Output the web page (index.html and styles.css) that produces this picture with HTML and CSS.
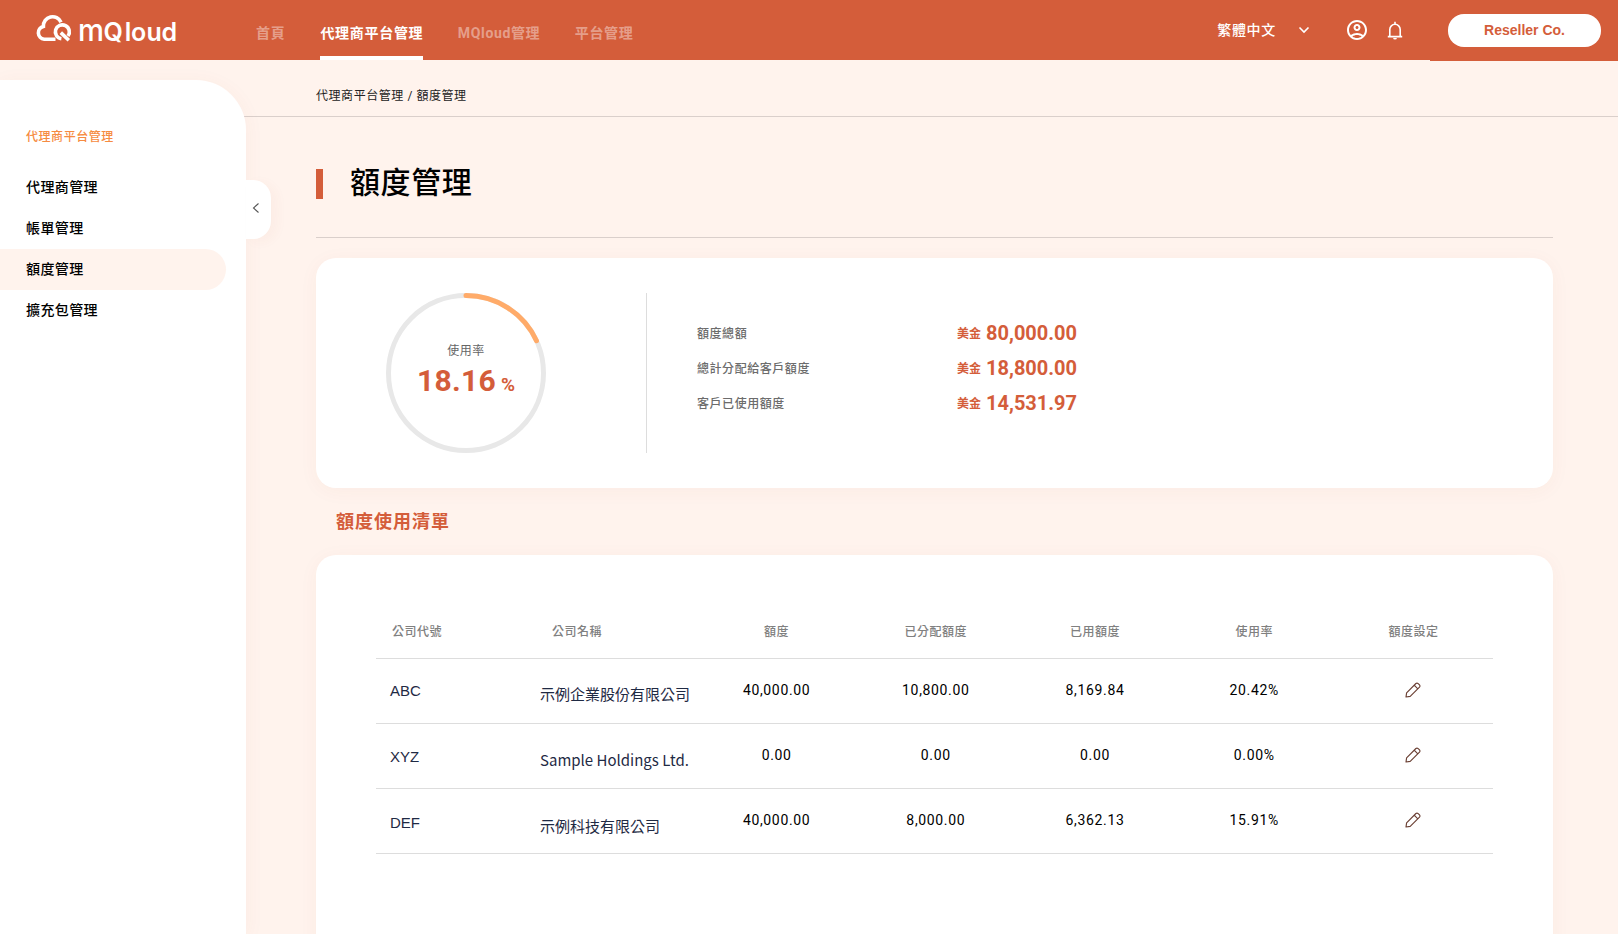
FILE: index.html
```html
<!DOCTYPE html>
<html lang="zh-Hant">
<head>
<meta charset="utf-8">
<title>額度管理</title>
<link rel="stylesheet" href="styles.css">
</head>
<body>
<header class="topbar">
  <svg class="logo" width="142" height="30" viewBox="0 0 142 30" role="img" aria-label="MQloud">
    <path class="logo-mark" d="M19.5 25.2H8.2A6.5 6.5 0 0 1 7.4 12.4A9.2 9.2 0 0 1 25 8.2"/>
    <path class="logo-mark" d="M25.4 24.8A7 7 0 1 1 32 22M24.8 18.6L32.8 26.2"/>
    <text class="logo-text logo-m" x="42" y="26.6" textLength="26" lengthAdjust="spacingAndGlyphs">m</text>
    <text class="logo-text" y="26.6" x="67.6 88.8 95 110.6 125.4">Qloud</text>
  </svg>
  <nav class="nav">
    <a class="nav-item">首頁</a>
    <a class="nav-item active">代理商平台管理</a>
    <a class="nav-item">MQloud管理</a>
    <a class="nav-item">平台管理</a>
  </nav>
  <div class="tools">
    <span class="language">繁體中文</span>
    <svg class="chevron" width="12" height="8" viewBox="0 0 12 8"><path d="M1.5 1.5L6 6L10.5 1.5"/></svg>
    <svg class="user" width="24" height="24" viewBox="0 0 24 24"><path d="M12 2C6.48 2 2 6.48 2 12s4.48 10 10 10 10-4.48 10-10S17.52 2 12 2zM7.35 18.5C8.66 17.56 10.26 17 12 17s3.34.56 4.65 1.5C15.34 19.44 13.74 20 12 20s-3.34-.56-4.65-1.5zm10.79-1.38C16.45 15.8 14.32 15 12 15s-4.45.8-6.14 2.12C4.7 15.73 4 13.95 4 12c0-4.42 3.58-8 8-8s8 3.58 8 8c0 1.95-.7 3.73-1.86 5.12zM12 6c-1.93 0-3.5 1.57-3.5 3.5S10.07 13 12 13s3.5-1.57 3.5-3.5S13.93 6 12 6zm0 5c-.83 0-1.5-.67-1.5-1.5S11.17 8 12 8s1.5.67 1.5 1.5S12.83 11 12 11z"/></svg>
    <svg class="bell" width="16" height="19" viewBox="0 0 16 19"><path d="M.8 15.6H15.2M2.8 15.4V8.5a5.2 5.2 0 0 1 10.4 0V15.4M8 .8V3"/><path class="bell-clapper" d="M6.1 17h3.8a1.9 1.6 0 0 1-3.8 0z"/></svg>
  </div>
  <div class="account"><span class="account-name">Reseller Co.</span></div>
</header>
<div class="layout">
  <aside class="sidebar">
    <div class="side-title">代理商平台管理</div>
    <a class="side-item">代理商管理</a>
    <a class="side-item">帳單管理</a>
    <a class="side-item current">額度管理</a>
    <a class="side-item">擴充包管理</a>
    <div class="collapse"><svg width="8" height="12" viewBox="0 0 8 12"><path d="M6.5 1.5L1.5 6L6.5 10.5"/></svg></div>
  </aside>
  <main class="main">
    <div class="breadcrumb">代理商平台管理 / 額度管理</div>
    <div class="content">
      <h1 class="title">額度管理</h1>
      <section class="card summary">
        <div class="gauge">
          <svg class="ring" width="160" height="160" viewBox="0 0 160 160">
            <circle class="ring-track" cx="80" cy="80" r="77.5"/>
            <circle class="ring-value" cx="80" cy="80" r="77.5" pathLength="100" stroke-dasharray="18.16 100" transform="rotate(-90 80 80)"/>
          </svg>
          <div class="gauge-label">使用率</div>
          <div class="gauge-value">18.16<span class="percent">%</span></div>
        </div>
        <dl class="totals">
          <dt>額度總額</dt><dd><span class="currency">美金</span>80,000.00</dd>
          <dt>總計分配給客戶額度</dt><dd><span class="currency">美金</span>18,800.00</dd>
          <dt>客戶已使用額度</dt><dd><span class="currency">美金</span>14,531.97</dd>
        </dl>
      </section>
      <h2 class="subtitle">額度使用清單</h2>
      <section class="card list">
        <div class="row head">
          <span class="left">公司代號</span><span class="left">公司名稱</span><span>額度</span><span>已分配額度</span><span>已用額度</span><span>使用率</span><span>額度設定</span>
        </div>
        <div class="row">
          <span class="code">ABC</span><span class="name">示例企業股份有限公司</span><span>40,000.00</span><span>10,800.00</span><span>8,169.84</span><span>20.42%</span>
          <span><svg class="pencil" width="16" height="16" viewBox="0 0 16 16"><path d="M1 15L1.6 10.8L10.9 1.5Q12 .6 13.2 1.6L14.5 2.9Q15.4 4 14.5 5.1L5.2 14.4ZM9.2 3.2L12.8 6.8"/></svg></span>
        </div>
        <div class="row second">
          <span class="code">XYZ</span><span class="name">Sample Holdings Ltd.</span><span>0.00</span><span>0.00</span><span>0.00</span><span>0.00%</span>
          <span><svg class="pencil" width="16" height="16" viewBox="0 0 16 16"><path d="M1 15L1.6 10.8L10.9 1.5Q12 .6 13.2 1.6L14.5 2.9Q15.4 4 14.5 5.1L5.2 14.4ZM9.2 3.2L12.8 6.8"/></svg></span>
        </div>
        <div class="row third">
          <span class="code">DEF</span><span class="name">示例科技有限公司</span><span>40,000.00</span><span>8,000.00</span><span>6,362.13</span><span>15.91%</span>
          <span><svg class="pencil" width="16" height="16" viewBox="0 0 16 16"><path d="M1 15L1.6 10.8L10.9 1.5Q12 .6 13.2 1.6L14.5 2.9Q15.4 4 14.5 5.1L5.2 14.4ZM9.2 3.2L12.8 6.8"/></svg></span>
        </div>
      </section>
    </div>
  </main>
</div>
</body>
</html>
```
FILE: styles.css
```css
* { box-sizing: border-box; }
body {
  margin: 0;
  height: 934px;
  overflow: hidden;
  display: flex;
  flex-direction: column;
  background: #fff3ed;
  color: #000;
  font-family: Roboto, "Noto Sans CJK TC", sans-serif;
  letter-spacing: .55px;
}
svg { display: block; flex: none; }

.topbar {
  display: flex;
  height: 60px;
  flex: none;
  padding-left: 36px;
  background: #d45d3a;
  color: #fff;
}
.logo { margin-top: 14px; overflow: visible; }
.logo-mark { fill: none; stroke: #fff; stroke-width: 3.6; }
.logo-text { fill: #fff; font: 600 25px Inter, sans-serif; letter-spacing: 0; }
.logo-m { font-size: 31px; font-weight: 500; }
.nav { display: flex; gap: 35px; margin-left: 78px; }
.nav-item {
  height: 60px;
  font-size: 14px;
  font-weight: 700;
  letter-spacing: .7px;
  line-height: 67px;
  color: rgba(255, 255, 255, .42);
}
.nav-item.active { color: #fff; border-bottom: 4px solid #fff; }
.nav-item:nth-child(n+3) { margin-left: -.5px; letter-spacing: .65px; }
.tools { display: flex; align-items: center; height: 60px; margin-left: auto; }
.language { margin-top: -2px; font-size: 14px; font-weight: 500; letter-spacing: .7px; }
.chevron { margin-left: 22px; }
.chevron path { fill: none; stroke: #fff; stroke-width: 1.6; }
.user { margin-left: 35px; fill: #fff; }
.bell { margin: 0 27px 0 18px; }
.bell path { fill: none; stroke: #fff; stroke-width: 1.6; }
.bell .bell-clapper { fill: #fff; stroke: none; }
.account { width: 188px; height: 61px; padding: 14px 0 0 18px; background: #d45d3a; }
.account-name {
  display: block;
  width: 153px;
  height: 33px;
  border-radius: 16px;
  background: #fff;
  color: #d45d3a;
  font: 700 14px/33px "Liberation Sans", sans-serif;
  letter-spacing: 0;
  text-align: center;
}

.layout { display: flex; flex: 1; min-height: 0; }
.sidebar {
  position: relative;
  z-index: 1;
  width: 246px;
  flex: none;
  margin-top: 20px;
  padding-top: 48px;
  border-radius: 0 50px 0 0;
  background: #fff;
  box-shadow: 0 3px 20px rgba(170, 80, 50, .05);
}
.side-title { height: 39px; padding-left: 26px; font-size: 12px; line-height: 18px; font-weight: 500; color: #f68b41; }
.side-item {
  display: block;
  width: 226px;
  height: 41px;
  padding-left: 26px;
  border-radius: 0 21px 21px 0;
  font-size: 14px;
  font-weight: 500;
  letter-spacing: .4px;
  line-height: 40px;
}
.side-item.current { background: #fff3ed; }
.collapse {
  position: absolute;
  left: 246px;
  top: 100px;
  display: flex;
  align-items: center;
  width: 25px;
  height: 59px;
  padding: 0 0 4px 6px;
  border-radius: 0 18px 18px 0;
  background: #fff;
  box-shadow: 6px 3px 12px rgba(170, 80, 50, .04);
}
.collapse path { fill: none; stroke: #555; stroke-width: 1.1; }

.main { flex: 1; display: flex; flex-direction: column; margin-left: -10px; }
.breadcrumb {
  height: 57px;
  flex: none;
  padding-left: 80px;
  border-bottom: 1px solid #dacfcb;
  font-size: 12px;
  line-height: 72px;
  color: #222;
}
.content { flex: 1; display: flex; flex-direction: column; padding: 0 65px 0 80px; }
.title {
  display: flex;
  align-items: center;
  gap: 27px;
  height: 121px;
  flex: none;
  margin: 0 0 20px;
  padding-top: 6px;
  border-bottom: 1px solid #dacfcb;
  font-size: 30px;
  font-weight: 500;
  letter-spacing: .6px;
}
.title::before { content: ""; width: 7px; height: 30px; margin-top: 8px; background: #d45d3a; }
.card { border-radius: 20px; background: #fff; box-shadow: 0 3px 20px rgba(170, 80, 50, .045); }
.summary { display: flex; align-items: center; height: 230px; flex: none; padding-left: 70px; }
.gauge {
  position: relative;
  width: 160px;
  height: 160px;
  padding-top: 48px;
  text-align: center;
}
.ring { position: absolute; left: 0; top: 0; }
.ring circle { fill: none; stroke-width: 5; }
.ring .ring-track { stroke: #e8e8e8; }
.ring .ring-value { stroke: #ffab69; stroke-linecap: round; }
.gauge-label { font-size: 12px; line-height: 20px; color: #666; }
.gauge-value { font-size: 30px; line-height: 40px; font-weight: 700; letter-spacing: .3px; color: #d45d3a; }
.percent { margin-left: 5px; font-size: 19px; letter-spacing: 0; }
.totals {
  display: grid;
  grid-template-columns: 260px auto;
  grid-auto-rows: 35px;
  align-content: center;
  align-items: center;
  height: 160px;
  margin: 0 0 0 100px;
  padding: 0 0 11px 50px;
  border-left: 1px solid #ddd;
}
.totals dt { font-size: 12px; color: #6c6c6c; font-weight: 500; }
.totals dd { display: flex; align-items: center; margin: 0; font-size: 20px; font-weight: 700; letter-spacing: 0; color: #d45d3a; }
.currency { margin-right: 5px; font-size: 12px; }
.subtitle { height: 67px; flex: none; margin: 0; padding-left: 20px; font-size: 18px; line-height: 67px; font-weight: 700; letter-spacing: 1px; color: #d45d3a; }
.list { flex: 1; margin-bottom: -30px; padding: 50px 60px 0; }
.row {
  display: grid;
  grid-template-columns: 160px 161px repeat(5, 1fr);
  align-items: center;
  height: 65px;
  padding-bottom: 2px;
  border-bottom: 1px solid #ddd;
  font-size: 14px;
  letter-spacing: .65px;
  text-align: center;
}
.row.head { height: 54px; font-size: 12px; font-weight: 500; letter-spacing: .5px; color: #808080; }
.row .left { padding-left: 16px; text-align: left; }
.row .code { padding-left: 14px; text-align: left; font: 400 15px "Liberation Sans", sans-serif; letter-spacing: 0; color: #1f2a44; }
.row .name { padding: 6px 0 0 4px; text-align: left; font: 400 15px "Noto Sans CJK TC", sans-serif; letter-spacing: 0; white-space: nowrap; color: #1f2a44; }
.row.second .code { padding-top: 2px; }
.row.second .name { padding-top: 8px; }
.row.third .code { padding-top: 4px; }
.row.third .name { padding-top: 10px; }
.pencil { margin: 0 auto; }
.pencil path { fill: none; stroke: #6b4034; stroke-width: 1.15; stroke-linejoin: round; }
```
